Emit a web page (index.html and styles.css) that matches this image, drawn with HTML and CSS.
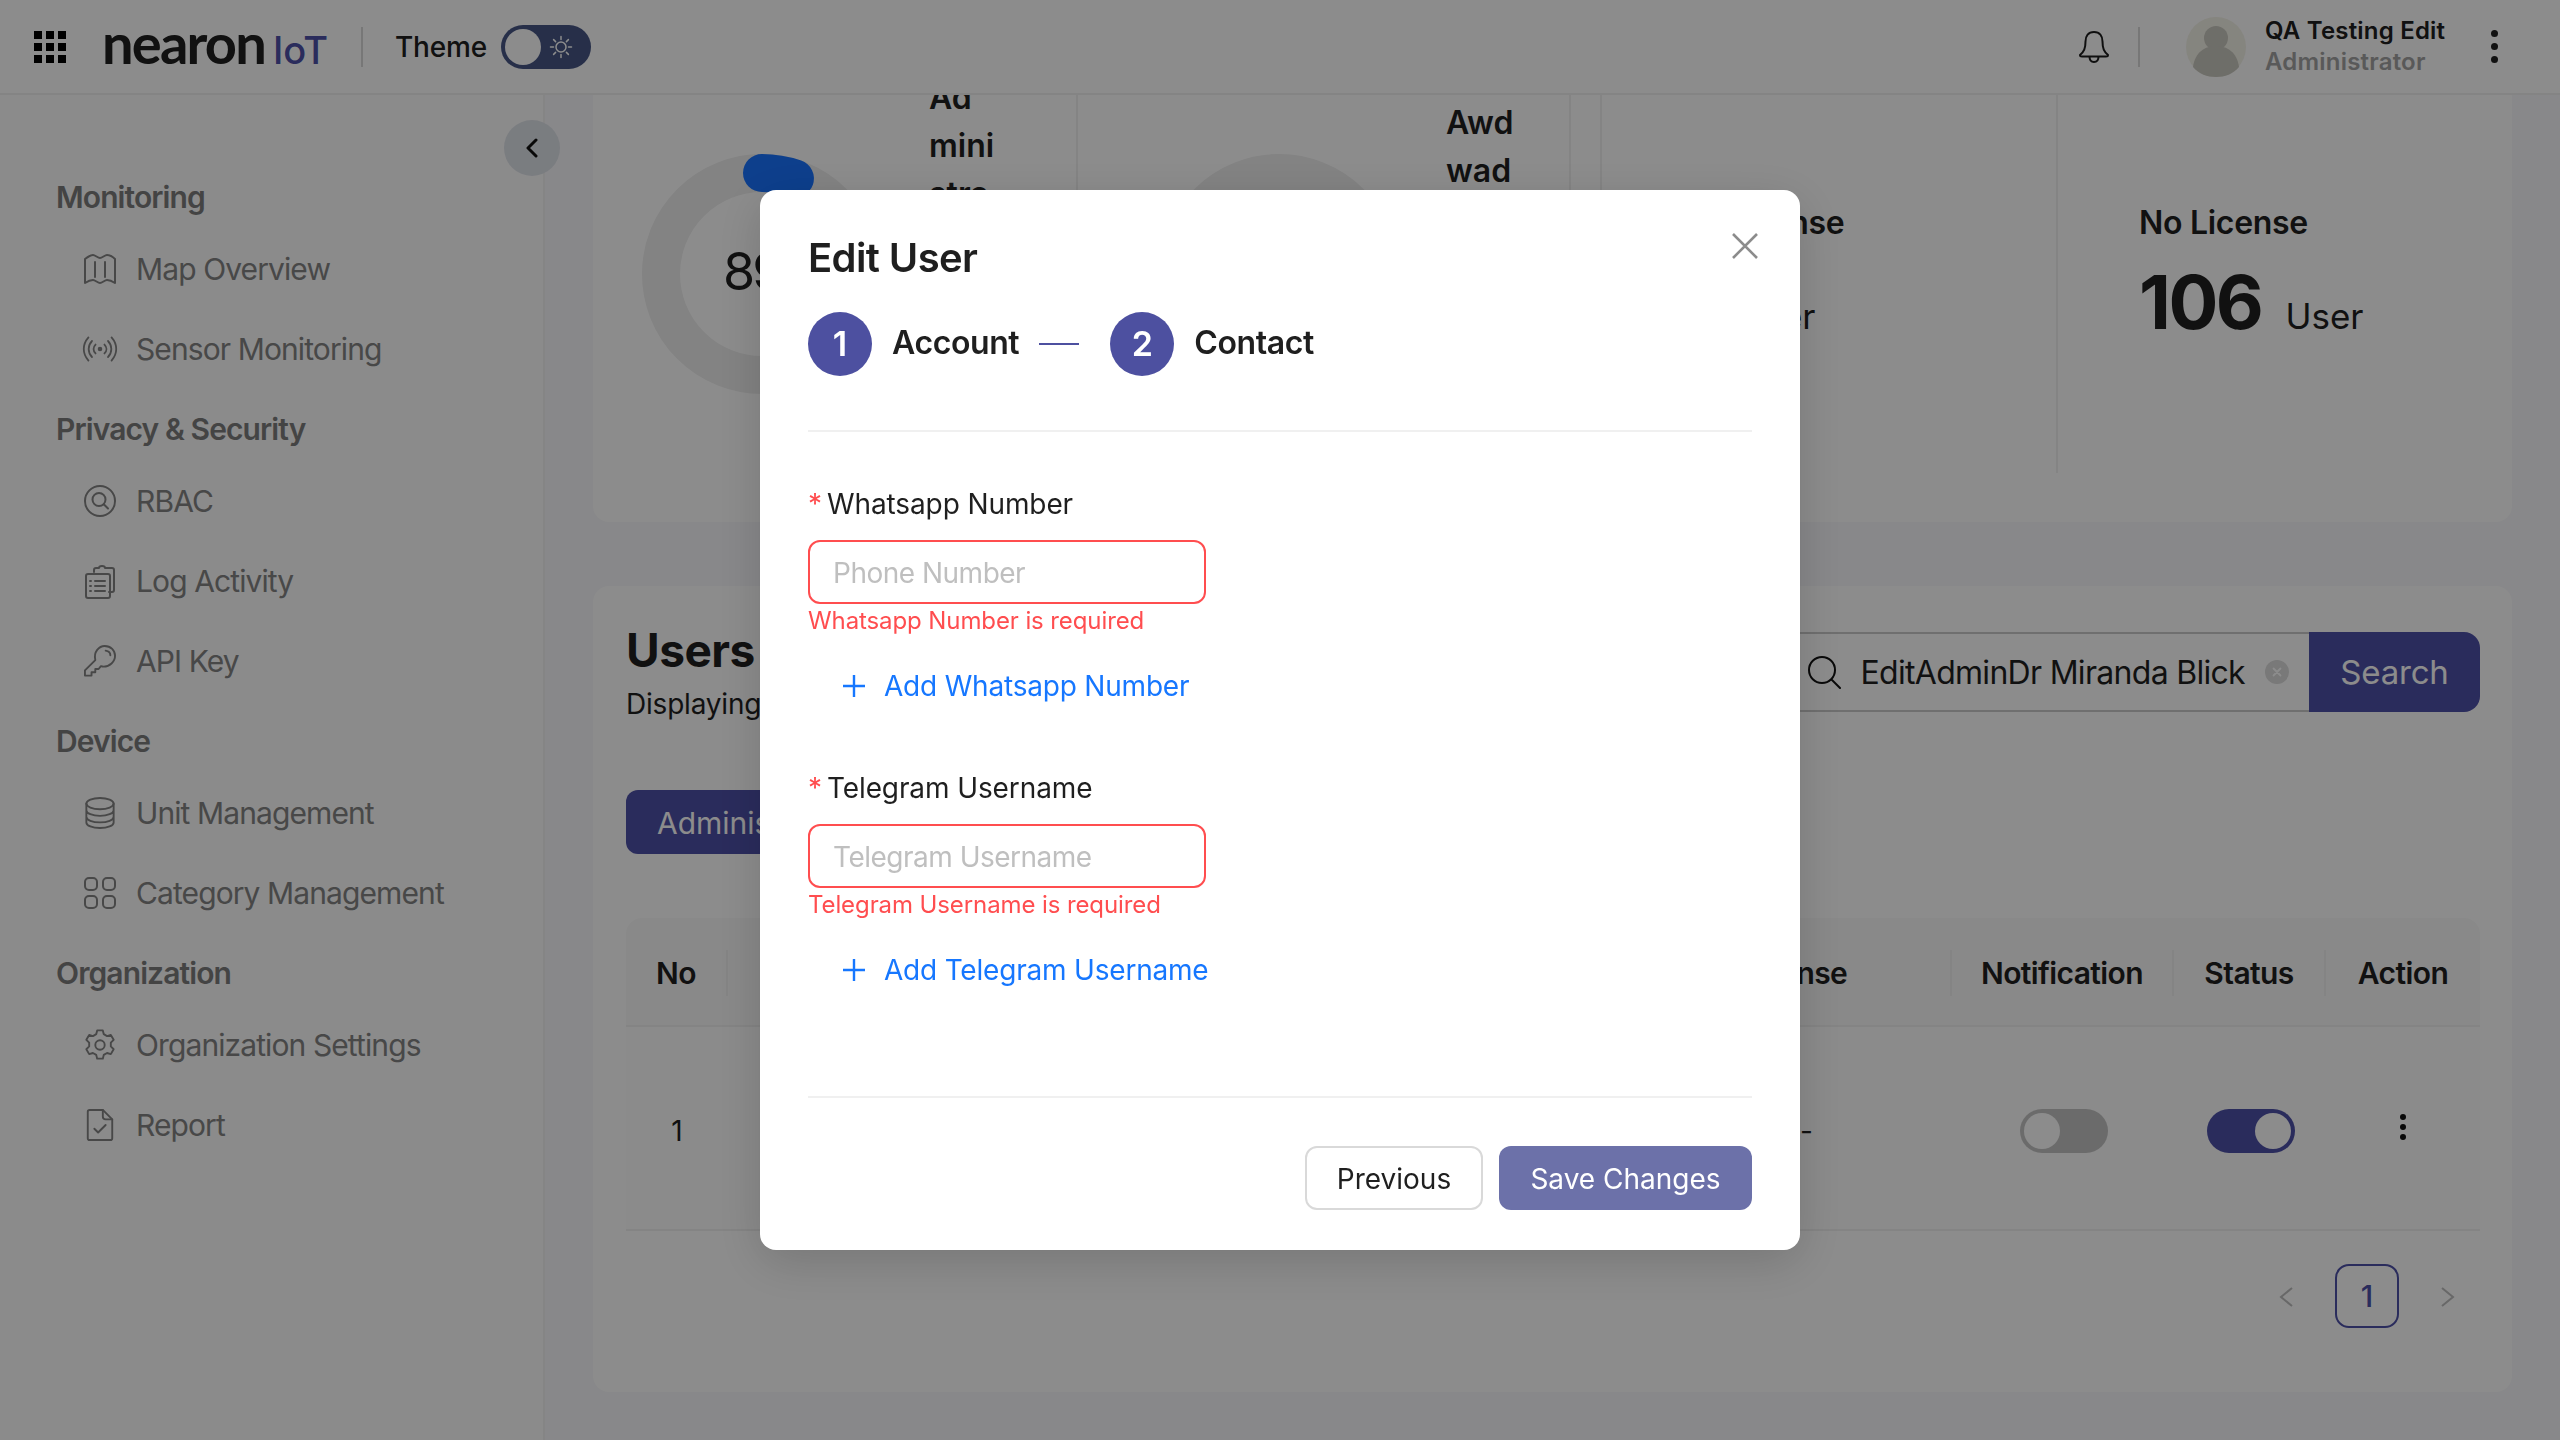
FILE: index.html
```html
<!DOCTYPE html>
<html lang="en">
<head>
<meta charset="utf-8">
<title>Nearon IoT - Users</title>
<link rel="stylesheet" href="styles.css">
</head>
<body>
<div class="app">
  <header class="topbar">
    <div class="tb-left">
      <svg class="grid-ico" viewBox="0 0 32 32" width="32" height="32"><g fill="#000"><rect x="0" y="0" width="8" height="8"/><rect x="12" y="0" width="8" height="8"/><rect x="24" y="0" width="8" height="8"/><rect x="0" y="12" width="8" height="8"/><rect x="12" y="12" width="8" height="8"/><rect x="24" y="12" width="8" height="8"/><rect x="0" y="24" width="8" height="8"/><rect x="12" y="24" width="8" height="8"/><rect x="24" y="24" width="8" height="8"/></g></svg>
      <div class="logo"><span class="logo-a">nearon</span><span class="logo-b">IoT</span></div>
      <span class="tb-div"></span>
      <span class="theme-label">Theme</span>
      <span class="theme-toggle">
        <span class="knob"></span>
        <svg viewBox="0 0 24 24" width="24" height="24" fill="none" stroke="#fff" stroke-width="1.5" stroke-linecap="round"><circle cx="12" cy="12" r="5"/><path d="M12 1.500v3M12 19.500v3M1.500 12h3M19.500 12h3M4.600 4.600l2 2M17.400 17.400l2 2M4.600 19.400l2-2M17.400 6.600l2-2"/></svg>
      </span>
    </div>
    <div class="tb-right">
      <svg class="bell" viewBox="0 0 30 32" width="30" height="32" fill="none" stroke="#1c1c1c" stroke-width="2" stroke-linejoin="round"><path d="M15 1C9 1 6.500 5.500 6.500 10.500c0 7-1.500 10-5.500 13.500 0 1 .5 1.500 2 1.500h24c1.500 0 2-.5 2-1.500-4-3.500-5.500-6.500-5.500-13.500C23.500 5.500 21 1 15 1z"/><path d="M10.500 25.500c0 3.500 2 5.500 4.500 5.500s4.500-2 4.500-5.500"/></svg>
      <span class="tb-div div-right"></span>
      <svg class="avatar" viewBox="0 0 60 60" width="60" height="60"><circle cx="30" cy="30" r="30" fill="#f3f2e8"/><circle cx="30" cy="21" r="12" fill="#c9c8bf"/><path d="M7 50c2-15 12-21 23-21s21 6 23 21c-6 7-14 10-23 10S13 57 7 50z" fill="#c9c8bf"/></svg>
      <div class="who"><div class="who-name">QA Testing Edit</div><div class="who-role">Administrator</div></div>
      <span class="dots-v"><i></i><i></i><i></i></span>
    </div>
  </header>

  <div class="body">
    <aside class="sidebar">
      <button class="collapse" type="button" aria-label="Collapse"><svg viewBox="0 0 14 20" width="14" height="20" fill="none" stroke="#111" stroke-width="3" stroke-linecap="round" stroke-linejoin="round"><path d="M11 2 3 10l8 8"/></svg></button>
      <div class="nav-head first">Monitoring</div>
      <div class="nav-item"><svg class="ni" viewBox="0 0 32 32"><path d="M1 6c4-3 6-4 8-4s5 3 7 3 5-3 7-3 5 1 8 4v24c-3-2-5-3-8-3-2 0-5 3-7 3s-5-3-7-3c-3 0-5 1-8 3z"/><path d="M11 9v15M21 9v15"/></svg><span>Map Overview</span></div>
      <div class="nav-item"><svg class="ni" viewBox="0 0 36 32"><circle cx="18" cy="16" r="1.600" fill="#838383"/><path d="M13 11c-3 3-3 7 0 10M23 11c3 3 3 7 0 10M9 7c-5 5-5 13 0 18M27 7c5 5 5 13 0 18M5 3c-7 8-7 18 0 26M31 3c7 8 7 18 0 26"/></svg><span>Sensor Monitoring</span></div>
      <div class="nav-head">Privacy &amp; Security</div>
      <div class="nav-item"><svg class="ni" viewBox="0 0 32 32"><circle cx="16" cy="16" r="15"/><circle cx="15" cy="14.500" r="6.500"/><path d="m20 19.500 4 4"/></svg><span>RBAC</span></div>
      <div class="nav-item"><svg class="ni" viewBox="0 0 32 32"><path d="M10 7V5c0-1 1-2 2-2h3c0-1.500 1-2 3-2s3 .5 3 2h7c1 0 2 1 2 2v20c0 1-1 2-2 2h-3"/><rect x="2" y="9" width="24" height="24" rx="2"/><path d="M6 16h1M11 16h10M6 21h1M11 21h10M6 26h1M11 26h10"/></svg><span>Log Activity</span></div>
      <div class="nav-item"><svg class="ni" viewBox="0 0 34 34"><path d="M12 16C10 7 16 1 22 1c6.500 0 11 5 11 10.500C33 18 27 23 21 23c-1 0-2-.2-3-.5l-2.500 3H12V29H8v3.500H1V27z"/><path d="M23 6c3 .5 5 2.500 5 5"/></svg><span>API Key</span></div>
      <div class="nav-head">Device</div>
      <div class="nav-item"><svg class="ni" viewBox="0 0 32 34"><ellipse cx="16" cy="7" rx="14.500" ry="6"/><path d="M1.500 7v20c0 3.500 6.500 6 14.500 6s14.500-2.500 14.500-6V7M1.500 14c0 3.500 6.500 6 14.500 6s14.500-2.500 14.500-6M1.500 21c0 3.500 6.500 6 14.500 6s14.500-2.500 14.500-6"/></svg><span>Unit Management</span></div>
      <div class="nav-item"><svg class="ni" viewBox="0 0 32 32"><rect x="1" y="1" width="12" height="12" rx="4"/><rect x="19" y="1" width="12" height="12" rx="4"/><rect x="1" y="19" width="12" height="12" rx="4"/><rect x="19" y="19" width="12" height="12" rx="4"/></svg><span>Category Management</span></div>
      <div class="nav-head">Organization</div>
      <div class="nav-item"><svg class="ni" viewBox="0 0 32 34"><circle cx="16" cy="17" r="5"/><path d="M13 1.500h6l1 4 3.500 2 4-1.200 3 5.200-3 3v4l3 3-3 5.200-4-1.200-3.500 2-1 4h-6l-1-4-3.500-2-4 1.200-3-5.200 3-3v-4l-3-3 3-5.200 4 1.200 3.500-2z"/></svg><span>Organization Settings</span></div>
      <div class="nav-item"><svg class="ni" viewBox="0 0 32 34"><path d="M3 3c0-1 1-2 2-2h14l10 10v20c0 1-1 2-2 2H5c-1 0-2-1-2-2z"/><path d="M19 1v7c0 2 1 3 3 3h7M10 21l4 4 8-8"/></svg><span>Report</span></div>
    </aside>

    <main class="main">
      <section class="card stats">
        <div class="stat-cell s1">
          <svg class="donut" viewBox="0 0 240 240" width="240" height="240"><circle class="track" cx="120" cy="120" r="101"/><circle class="arc" cx="120" cy="120" r="101" pathLength="100" stroke-dasharray="5.300 100" transform="rotate(-90 120 120)"/></svg>
          <span class="pct">89%</span>
          <div class="role-name">Ad<br>mini<br>stra<br>tor</div>
        </div>
        <div class="stat-cell s2">
          <svg class="donut" viewBox="0 0 240 240" width="240" height="240"><circle class="track" cx="120" cy="120" r="101"/></svg>
          <div class="role-name">Awd<br>wad</div>
        </div>
        <div class="stat-cell s3">
          <div class="lic-label">On License</div>
          <div class="lic-row"><span class="lic-num">1</span><span class="lic-unit">User</span></div>
        </div>
        <div class="stat-cell s4">
          <div class="lic-label">No License</div>
          <div class="lic-row"><span class="lic-num">106</span><span class="lic-unit">User</span></div>
        </div>
      </section>

      <section class="card users">
        <div class="users-head">
          <div>
            <h1 class="users-title">Users</h1>
            <p class="users-sub">Displaying 1 users</p>
          </div>
          <div class="search">
            <div class="search-box">
              <svg viewBox="0 0 34 34" width="34" height="34" fill="none" stroke="#111" stroke-width="2" stroke-linecap="round"><circle cx="15" cy="15" r="13"/><path d="m25 25 8 8"/></svg>
              <span class="search-val">EditAdminDr Miranda Blick</span>
              <svg viewBox="0 0 24 24" width="24" height="24"><circle cx="12" cy="12" r="12" fill="#dcdcdc"/><path d="m8.500 8.500 7 7m0-7-7 7" stroke="#fff" stroke-width="1.800" stroke-linecap="round"/></svg>
            </div>
            <button class="search-btn" type="button">Search</button>
          </div>
        </div>
        <button class="tab" type="button">Administrator</button>
        <div class="table">
          <div class="tr th">
            <div class="cell">No</div>
            <div class="cell">Name</div>
            <div class="cell lic-head">License</div>
            <div class="cell">Notification</div>
            <div class="cell">Status</div>
            <div class="cell">Action</div>
          </div>
          <div class="tr td">
            <div class="cell">1</div>
            <div class="cell">Dr Miranda Blick</div>
            <div class="cell lic">-</div>
            <div class="cell"><span class="sw off"><i></i></span></div>
            <div class="cell"><span class="sw on"><i></i></span></div>
            <div class="cell"><span class="dots-v small"><i></i><i></i><i></i></span></div>
          </div>
        </div>
        <div class="pager">
          <svg class="chev" viewBox="0 0 14 20" width="14" height="20" fill="none" stroke="#bdbdbd" stroke-width="2"><path d="M13 1 2 10l11 9"/></svg>
          <span class="page-no">1</span>
          <svg class="chev" viewBox="0 0 14 20" width="14" height="20" fill="none" stroke="#bdbdbd" stroke-width="2"><path d="m1 1 11 9-11 9"/></svg>
        </div>
      </section>
    </main>
  </div>
</div>

<div class="overlay"></div>
<div class="modal" role="dialog">
  <svg class="close" viewBox="0 0 26 26" width="26" height="26" fill="none" stroke="#8c8c8c" stroke-width="2.600"><path d="m1 1 24 24M25 1 1 25"/></svg>
  <h2 class="m-title">Edit User</h2>
  <div class="steps">
    <span class="step-no">1</span><span class="step-name">Account</span>
    <span class="step-line"></span>
    <span class="step-no">2</span><span class="step-name">Contact</span>
  </div>
  <div class="rule"></div>
  <label class="f-label first"><span class="star">*</span>Whatsapp Number</label>
  <div class="f-input">Phone Number</div>
  <div class="f-err">Whatsapp Number is required</div>
  <div class="f-add"><svg viewBox="0 0 24 24" width="24" height="24" fill="none" stroke="#1677ff" stroke-width="2.400"><path d="M12 1v22M1 12h22"/></svg><span>Add Whatsapp Number</span></div>
  <label class="f-label"><span class="star">*</span>Telegram Username</label>
  <div class="f-input">Telegram Username</div>
  <div class="f-err">Telegram Username is required</div>
  <div class="f-add"><svg viewBox="0 0 24 24" width="24" height="24" fill="none" stroke="#1677ff" stroke-width="2.400"><path d="M12 1v22M1 12h22"/></svg><span>Add Telegram Username</span></div>
  <div class="m-foot">
    <div class="rule"></div>
    <div class="m-btns">
      <button class="btn ghost" type="button">Previous</button>
      <button class="btn primary" type="button">Save Changes</button>
    </div>
  </div>
</div>
</body>
</html>
```
FILE: styles.css
```css
* { box-sizing: border-box; }
html, body { margin: 0; padding: 0; width: 2560px; height: 1440px; overflow: hidden; }
body { font-family: Inter, "Noto Sans", sans-serif; color: #1f1f1f; background: #f8f8fb; }
button { font-family: inherit; }
.app { width: 2560px; height: 1440px; display: flex; flex-direction: column; }

/* top bar */
.topbar { height: 95px; flex: none; display: flex; align-items: center; justify-content: space-between; background: #fff; border-bottom: 2px solid #f0f0f0; }
.tb-left { display: flex; align-items: center; padding-left: 34px; }
.logo { display: flex; align-items: baseline; margin-left: 36px; width: 259px; }
.logo-a { font-size: 56px; font-weight: 700; line-height: 50px; letter-spacing: -1.800px; color: #202020; font-family: Lato, Inter, sans-serif; }
.logo-b { font-size: 38px; font-weight: 500; color: #4d50a8; margin-left: 8px; line-height: 50px; }
.tb-div { width: 2px; height: 40px; background: #d9d9d9; display: block; }
.theme-label { font-size: 28px; font-weight: 500; margin-left: 32px; width: 106px; letter-spacing: -.2px; color: #202020; }
.theme-toggle { width: 90px; height: 44px; border-radius: 22px; background: #475786; display: flex; align-items: center; padding-left: 4px; }
.theme-toggle .knob { width: 36px; height: 36px; border-radius: 50%; background: #fff; margin-right: 8px; }
.tb-right { display: flex; align-items: center; padding-right: 61px; }
.div-right { margin-left: 29px; margin-right: 46px; }
.who { margin-left: 19px; width: 226px; }
.who-name { font-size: 24px; font-weight: 600; line-height: 32px; color: #202020; letter-spacing: .2px; }
.who-role { font-size: 24px; font-weight: 600; line-height: 32px; color: #a3a3a3; letter-spacing: .2px; margin-top: -1px; }
.dots-v { display: flex; flex-direction: column; gap: 6px; width: 8px; }
.dots-v i { display: block; width: 7px; height: 7px; border-radius: 50%; background: #202020; }
.dots-v.small { gap: 4px; width: 6px; margin: -8px auto 0; }
.dots-v.small i { width: 6px; height: 6px; background: #111; }

/* body */
.body { flex: 1; display: flex; min-height: 0; }
.sidebar { width: 545px; flex: none; position: relative; background: #fdfdfd; border-right: 2px solid #f2f2f2; padding: 0 0 0 56px; }
.collapse { position: absolute; left: 504px; top: 25px; width: 56px; height: 56px; border: 0; border-radius: 50%; background: #dfe3ea; display: flex; align-items: center; justify-content: center; padding: 0; }
.nav-head { font-size: 30px; font-weight: 600; color: #7d7d7d; height: 40px; line-height: 40px; margin-top: 40px; letter-spacing: -.9px; }
.nav-head.first { margin-top: 82px; }
.nav-item { display: flex; align-items: center; height: 40px; margin-top: 40px; margin-left: 28px; font-size: 30px; color: #838383; letter-spacing: -.9px; }
.nav-head + .nav-item { margin-top: 32px; }
.ni { width: 32px; height: 32px; margin-right: 20px; fill: none; stroke: #838383; stroke-width: 2; stroke-linecap: round; stroke-linejoin: round; flex: none; overflow: visible; }

/* main */
.main { flex: 1; min-width: 0; overflow: hidden; padding: 0 48px 0 48px; }
.card { background: #fff; border-radius: 16px; }
.stats { margin-top: -25px; height: 452px; display: grid; grid-template-columns: 485px 522px 458px 454px; }
.stat-cell { position: relative; display: flex; align-items: flex-start; height: 403px; }
.s1 { padding: 84px 0 0 49px; border-right: 2px solid #f0f0f0; }
.s2 { padding: 84px 0 0 81px; margin-right: 29px; border-right: 2px solid #f0f0f0; }
.s3, .s4 { flex-direction: column; padding: 131px 0 0 81px; }
.s3 { border-right: 2px solid #f0f0f0; border-left: 2px solid #f0f0f0; padding-left: 73px; }
.donut { flex: none; }
.track { fill: none; stroke: #eeeeee; stroke-width: 38; }
.arc { fill: none; stroke: #1873ff; stroke-width: 38; stroke-linecap: round; }
.pct { position: absolute; left: 130px; top: 168px; font-size: 52px; line-height: 68px; letter-spacing: -3px; color: #1f1f1f; }
.role-name { font-size: 32px; font-weight: 600; line-height: 48px; margin-left: 47px; margin-top: -80px; color: #1f1f1f; }
.s2 .role-name { margin-top: -55px; }
.lic-label { font-size: 32px; font-weight: 600; line-height: 44px; letter-spacing: -.3px; color: #1f1f1f; }
.lic-row { display: flex; align-items: baseline; margin-top: 12px; }
.lic-num { font-size: 74px; font-weight: 700; line-height: 90px; letter-spacing: -2.500px; color: #1f1f1f; }
.lic-unit { font-size: 35px; margin-left: 24px; color: #1f1f1f; }
.s3 .lic-unit { margin-left: 33px; }

.users { margin-top: 64px; height: 806px; padding: 32px 32px 0 33px; }
.users-head { display: flex; justify-content: space-between; align-items: flex-start; }
.users-title { margin: 0; font-size: 46px; line-height: 64px; font-weight: 700; letter-spacing: -.5px; color: #1f1f1f; }
.users-sub { margin: 2px 0 0; font-size: 28px; line-height: 40px; letter-spacing: -.2px; color: #1f1f1f; }
.search { display: flex; margin-top: 14px; height: 80px; }
.search-box { width: 800px; display: flex; align-items: center; justify-content: flex-end; gap: 20px; padding-right: 20px; border: 2px solid #cacaca; border-right: 0; }
.search-val { font-size: 32px; letter-spacing: -.7px; color: #1f1f1f; }
.search-btn { width: 171px; border: 0; border-radius: 0 16px 16px 0; background: #4d50a8; color: #fff; font-size: 33px; padding: 0; letter-spacing: -.2px; }
.tab { display: block; margin-top: 66px; height: 64px; width: 300px; border: 0; border-radius: 12px; background: #4d50a8; color: #fff; font-size: 30px; text-align: left; padding: 2px 0 0 31px; }
.table { margin-top: 64px; border-radius: 16px 16px 0 0; overflow: hidden; }
.tr { display: grid; grid-template-columns: 102px 972px 252px 222px 152px 154px; align-items: center; }
.th { height: 109px; padding-top: 2px; background: #fafafa; border-bottom: 2px solid #f0f0f0; font-size: 30px; font-weight: 600; letter-spacing: -.6px; color: #1f1f1f; }
.th .cell { height: 46px; line-height: 46px; text-align: center; border-right: 2px solid #f0f0f0; }
.th .cell:last-child { border-right: 0; }
.th .cell.lic-head { padding-right: 64px; }
.td { height: 204px; padding-top: 6px; font-size: 28px; background: #fdfdfd; border-bottom: 2px solid #f0f0f0; color: #1f1f1f; }
.td .cell { text-align: center; }
.td .cell.lic { text-align: left; padding-left: 100px; }
.sw { display: block; width: 88px; height: 44px; border-radius: 22px; margin-left: calc(50% - 43px); padding: 4px; }
.sw i { display: block; width: 36px; height: 36px; border-radius: 50%; background: #fff; }
.sw.off { background: #c4c4c4; }
.sw.on { background: #4d50a8; }
.sw.on i { margin-left: 44px; }
.pager { display: flex; align-items: center; justify-content: flex-end; margin-top: 33px; padding-right: 25px; height: 64px; gap: 42px; }
.chev { margin-top: 2px; }
.page-no { width: 64px; height: 64px; border: 2px solid #4d50a8; border-radius: 14px; display: flex; align-items: center; justify-content: center; font-size: 30px; font-weight: 500; color: #4d50a8; }

/* modal */
.overlay { position: fixed; inset: 0; background: rgba(0,0,0,.45); }
.modal { position: fixed; left: 760px; top: 190px; width: 1040px; height: 1060px; background: #fff; border-radius: 16px; padding: 44px 48px 40px; display: flex; flex-direction: column; box-shadow: 0 12px 48px rgba(0,0,0,.16); }
.close { position: absolute; left: 972px; top: 43px; }
.m-title { margin: 0; font-size: 40px; line-height: 48px; font-weight: 600; color: #1f1f1f; letter-spacing: -.6px; }
.steps { display: flex; align-items: center; margin-top: 30px; height: 64px; }
.step-no { width: 64px; height: 64px; border-radius: 50%; background: #4d50a0; color: #fff; font-size: 34px; font-weight: 600; display: flex; align-items: center; justify-content: center; padding-bottom: 2px; }
.step-name { font-size: 32px; font-weight: 600; margin-left: 20px; margin-top: -3px; color: #1f1f1f; letter-spacing: -.4px; }
.step-line { width: 40px; height: 2px; background: #4d50a0; margin: 0 31px 0 20px; }
.rule { height: 2px; background: #f0f0f0; }
.steps + .rule { margin-top: 54px; }
.f-label { display: block; height: 40px; line-height: 40px; font-size: 28px; margin-top: 58px; color: #1f1f1f; letter-spacing: -.1px; }
.f-label.first { margin-top: 52px; }
.star { color: #ff4d4f; margin-right: 5px; font-size: 28px; }
.f-input { width: 398px; height: 64px; margin-top: 16px; border: 2px solid #ff4d4f; border-radius: 12px; padding-left: 23px; line-height: 62px; font-size: 28px; letter-spacing: -.5px; color: #bfbfbf; }
.f-err { height: 34px; line-height: 34px; font-size: 24px; color: #ff4d4f; letter-spacing: -.1px; }
.f-add { display: flex; align-items: center; height: 48px; margin-top: 24px; padding-left: 34px; font-size: 28px; color: #1677ff; letter-spacing: -.2px; }
.f-add span { margin-left: 18px; }
.m-foot { margin-top: auto; }
.m-btns { display: flex; justify-content: flex-end; gap: 16px; margin-top: 48px; }
.btn { height: 64px; border-radius: 12px; font-size: 28px; padding: 2px 0 0; }
.btn.ghost { width: 178px; background: #fff; border: 2px solid #d9d9d9; color: #1f1f1f; }
.btn.primary { width: 253px; background: #6c71a9; border: 0; color: #fff; }
```
